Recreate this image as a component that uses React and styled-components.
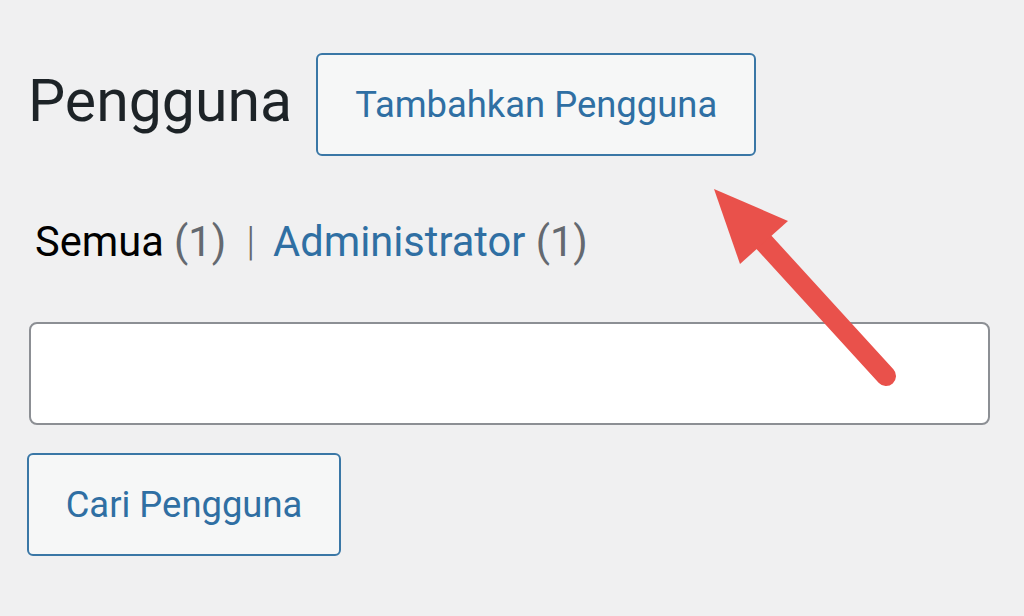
import styled, { createGlobalStyle } from "styled-components";

const GlobalStyle = createGlobalStyle`
  html, body {
    margin: 0;
    padding: 0;
    background: #f0f0f1;
    font-family: Roboto, "Noto Sans", sans-serif;
  }
`;

const Page = styled.div`
  position: relative;
  width: 1024px;
  height: 616px;
  overflow: hidden;
  padding: 53px 35px 0 28px;
  box-sizing: border-box;
  display: flex;
  flex-direction: column;
`;

const HeaderRow = styled.div`
  display: flex;
  align-items: center;
  gap: 24px;
`;

const Title = styled.h1`
  margin: 0;
  font-size: 59px;
  font-weight: 400;
  color: #1d2327;
  line-height: 1;
  padding-bottom: 8px;
`;

const OutlineButton = styled.button`
  box-sizing: border-box;
  height: 103px;
  padding: 0 ${(p) => p.$pad}px;
  background: #f6f7f7;
  border: 2px solid #3a77a6;
  border-radius: 6px;
  color: #2f6fa3;
  font-family: Roboto, "Noto Sans", sans-serif;
  font-size: 36.4px;
  font-weight: 400;
  cursor: pointer;
`;

const Filters = styled.ul`
  list-style: none;
  margin: 62px 0 0 7px;
  padding: 0;
  display: flex;
  align-items: center;
  font-size: 41.6px;
  line-height: 48px;
  color: #1d2327;
`;

const FilterItem = styled.li`
  color: ${(p) => (p.$current ? "#000" : "#2f6fa3")};
`;

const Count = styled.span`
  color: #646970;
`;

const Sep = styled.span`
  color: #646970;
  margin: 0 18px 0 20px;
  font-size: 40px;
  font-weight: 300;
`;

const SearchInput = styled.input`
  box-sizing: border-box;
  width: 961px;
  height: 103px;
  margin: 56px 0 0 1px;
  background: #fff;
  border: 2px solid #8c8f94;
  border-radius: 8px;
  font-size: 37px;
  outline: none;
`;

const SearchButton = styled(OutlineButton)`
  margin: 28px 0 0 -1px;
  align-self: flex-start;
  width: 314px;
`;

const Arrow = styled.svg`
  position: absolute;
  left: 0;
  top: 0;
  pointer-events: none;
`;

export default function App() {
  return (
    <>
      <GlobalStyle />
      <Page>
        <HeaderRow>
          <Title>Pengguna</Title>
          <OutlineButton $pad={37}>Tambahkan Pengguna</OutlineButton>
        </HeaderRow>
        <Filters>
          <FilterItem $current>
            Semua <Count>(1)</Count>
          </FilterItem>
          <Sep>|</Sep>
          <FilterItem>
            Administrator <Count>(1)</Count>
          </FilterItem>
        </Filters>
        <SearchInput type="search" />
        <SearchButton $pad={0}>Cari Pengguna</SearchButton>
        <Arrow width="1024" height="616" viewBox="0 0 1024 616">
          <line
            x1="886"
            y1="376"
            x2="760"
            y2="238"
            stroke="#e9514b"
            strokeWidth="20"
            strokeLinecap="round"
          />
          <polygon points="714,189 788,221 740,264" fill="#e9514b" />
        </Arrow>
      </Page>
    </>
  );
}
